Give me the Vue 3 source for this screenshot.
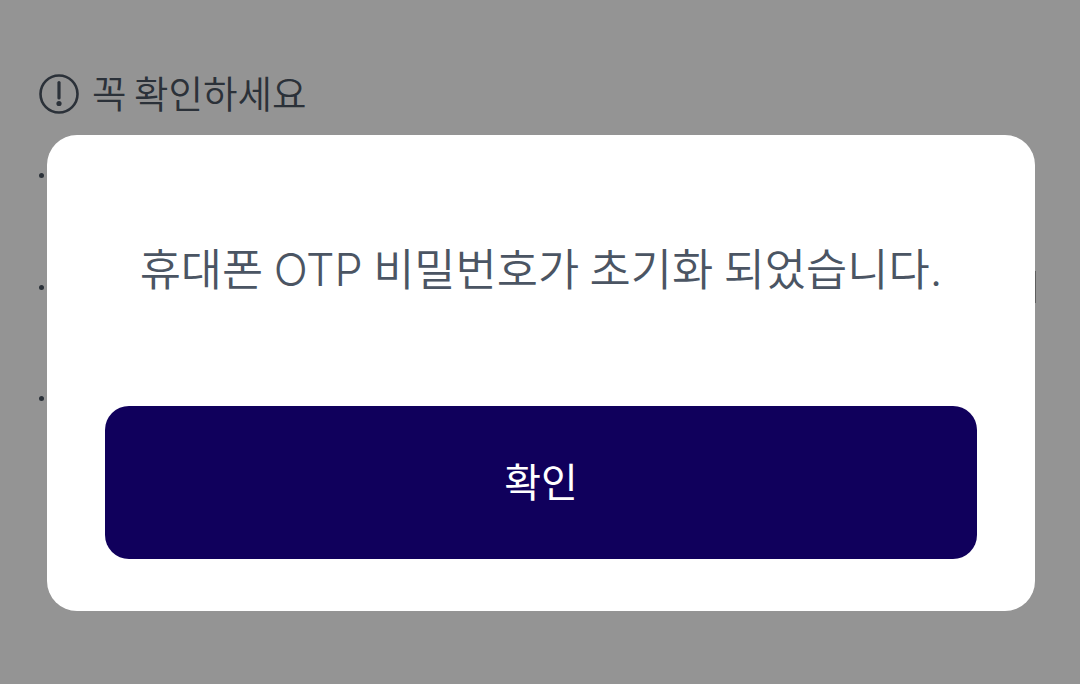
<script setup>
const notes = [{ id: 1 }, { id: 2 }, { id: 3 }]
</script>

<template>
  <div class="page">
    <div class="notice">
      <div class="notice__title">
        <svg class="notice__icon" viewBox="0 0 40 40" fill="none">
          <circle cx="20" cy="20" r="18.5" stroke="currentColor" stroke-width="2.6" />
          <path d="M20 8.5v15.5" stroke="currentColor" stroke-width="3.2" stroke-linecap="round" />
          <circle cx="20" cy="29.5" r="2.6" fill="currentColor" />
        </svg>
        <span class="notice__text">꼭 확인하세요</span>
      </div>
      <ul class="notice__list">
        <li v-for="note in notes" :key="note.id" class="notice__item"></li>
      </ul>
    </div>

    <div class="overlay">
      <div class="dialog">
        <div class="dialog__message">휴대폰 OTP 비밀번호가 초기화 되었습니다.</div>
        <button class="dialog__button" type="button">확인</button>
        <span class="dialog__scrollbar"></span>
      </div>
    </div>
  </div>
</template>

<style scoped>
.page {
  position: relative;
  width: 1080px;
  height: 684px;
  overflow: hidden;
  background: #fff;
  font-family: Inter, "Noto Sans CJK KR", sans-serif;
  font-weight: 350;
  color: #4b5563;
}

.notice {
  padding: 70px 0 0 39px;
}

.notice__title {
  display: flex;
  align-items: center;
  gap: 13px;
  height: 48px;
  font-size: 37.5px;
  line-height: 48px;
  word-spacing: -3px;
}

.notice__text {
  position: relative;
  top: 1px;
}

.notice__icon {
  width: 40px;
  height: 40px;
  flex: none;
}

.notice__list {
  list-style: none;
  margin: 0;
  padding: 0;
}

.notice__item {
  width: 5px;
  height: 5px;
  margin-bottom: 106.5px;
  border-radius: 50%;
  background: currentColor;
}

.notice__item:first-child {
  margin-top: 55px;
}

.overlay {
  position: absolute;
  inset: 0;
  display: flex;
  align-items: flex-start;
  justify-content: center;
  padding: 135px 0 0 2px;
  background: rgba(0, 0, 0, 0.42);
}

.dialog {
  position: relative;
  display: flex;
  flex-direction: column;
  align-items: center;
  box-sizing: border-box;
  width: 988px;
  height: 476px;
  padding: 0 58px 52px;
  border-radius: 30px;
  background: #fff;
}

.dialog__message {
  display: flex;
  align-items: center;
  justify-content: center;
  flex: 1;
  width: 100%;
  padding-bottom: 8px;
  font-size: 44.8px;
  word-spacing: -2.2px;
  white-space: nowrap;
  color: #4b5563;
}

.dialog__button {
  width: 872px;
  height: 153px;
  flex: none;
  padding: 0 0 6px;
  border: 0;
  border-radius: 24px;
  background: #10005c;
  color: #fff;
  font-family: inherit;
  font-weight: 400;
  font-size: 40px;
}

.dialog__scrollbar {
  position: absolute;
  top: 136px;
  right: -1px;
  width: 1px;
  height: 32px;
  background: #5f5f5f;
}
</style>

<style>
html,
body {
  margin: 0;
}
</style>
